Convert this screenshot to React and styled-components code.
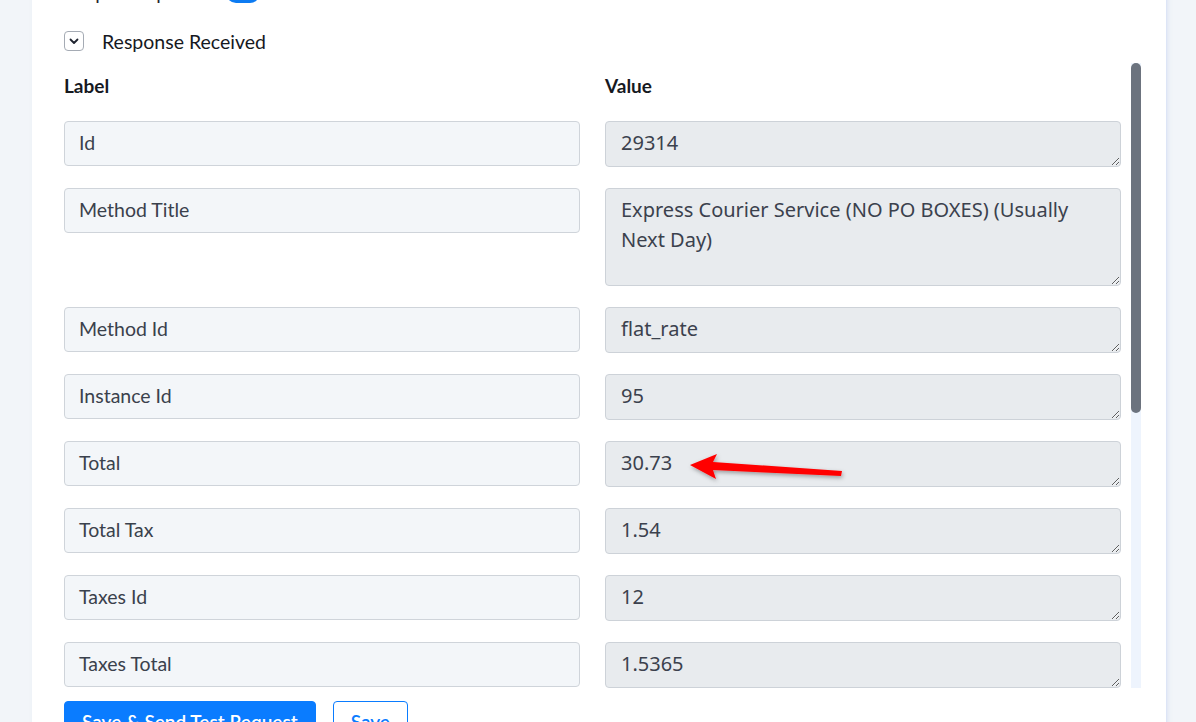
import React from "react";
import styled, { createGlobalStyle } from "styled-components";

const GlobalStyle = createGlobalStyle`
  body {
    margin: 0;
    background: #f2f5f9;
    font-family: Lato, "Noto Sans", sans-serif;
  }
`;

const Page = styled.div`
  height: 722px;
  overflow: hidden;
  padding: 0 30px 0 32px;
`;

const Card = styled.div`
  background: #ffffff;
  margin-top: -20px;
  padding: 0 25px 40px 32px;
  box-shadow: 1px 0 0 #dde5f6, 2px 0 4px rgba(160, 180, 230, 0.25);
`;

const TopRow = styled.div`
  display: flex;
  align-items: center;
  gap: 18px;
  height: 24px;
  font-size: 19.5px;
  color: #1f2430;
`;

const Toggle = styled.span`
  display: inline-block;
  width: 34px;
  height: 20px;
  border-radius: 10px;
  background: #0d7bf2;
  margin-top: 2px;
`;

const ResponseHeader = styled.div`
  display: flex;
  align-items: center;
  gap: 18px;
  margin-top: 25px;
  height: 24px;
  font-size: 19.5px;
  color: #16191f;
`;

const ChevronBox = styled.span`
  width: 18px;
  height: 18px;
  border: 1px solid #a5abb4;
  border-radius: 4px;
  display: flex;
  align-items: center;
  justify-content: center;
`;

const ScrollFrame = styled.div`
  display: flex;
  margin-top: 10px;
  height: 625px;
`;

const ScrollArea = styled.div`
  flex: 1;
  overflow: hidden;
`;

const ScrollTrack = styled.div`
  width: 10px;
  background: #eef4fd;
`;

const ScrollThumb = styled.div`
  height: 350px;
  background: #6c737e;
  border-radius: 5px;
`;

const Grid = styled.div`
  display: grid;
  grid-template-columns: 516px 516px;
  column-gap: 25px;
  row-gap: 21px;
  align-items: start;
  padding-bottom: 20px;
`;

const ColHead = styled.div`
  padding-top: 12px;
  height: 25px;
  line-height: 22px;
  font-size: 19px;
  font-weight: 700;
  color: #16191f;
`;

const LabelBox = styled.div`
  box-sizing: border-box;
  height: 45px;
  padding: 6px 14px;
  line-height: 30px;
  font-size: 19.5px;
  color: #3a414c;
  background: #f3f6f9;
  border: 1px solid #cfd4da;
  border-radius: 4px;
`;

const ValueCell = styled.div`
  position: relative;
`;

const ValueArea = styled.textarea`
  display: block;
  box-sizing: border-box;
  width: 100%;
  height: ${(p) => (p.$tall ? "98px" : "46px")};
  margin: 0;
  padding: 6px 15px;
  line-height: 30px;
  font-size: 20px;
  font-family: "Noto Sans", sans-serif;
  color: #3b414d;
  background: #e8ebee;
  border: 1px solid #cdd2d8;
  border-radius: 4px;
  outline: none;
  overflow: hidden;
`;

const Arrow = styled.svg`
  position: absolute;
  left: 0;
  top: 0;
  overflow: visible;
  pointer-events: none;
`;

const Actions = styled.div`
  display: flex;
  gap: 17px;
  margin-top: 13px;
`;

const Button = styled.button`
  height: 40px;
  padding: 0 17px;
  font-family: Lato, sans-serif;
  font-size: 19px;
  font-weight: 600;
  border-radius: 4px;
  border: 1px solid #0a7cff;
  background: ${(p) => (p.$primary ? "#0a7cff" : "#ffffff")};
  color: ${(p) => (p.$primary ? "#ffffff" : "#0a7cff")};
`;

const rows = [
  { label: "Id", value: "29314" },
  { label: "Method Title", value: "Express Courier Service (NO PO BOXES) (Usually Next Day)", tall: true },
  { label: "Method Id", value: "flat_rate" },
  { label: "Instance Id", value: "95" },
  { label: "Total", value: "30.73", arrow: true },
  { label: "Total Tax", value: "1.54" },
  { label: "Taxes Id", value: "12" },
  { label: "Taxes Total", value: "1.5365" },
  { label: "Taxes Subtotal", value: "" },
  { label: "Meta Data Id", value: "245771" },
  { label: "Meta Data Key", value: "Items" },
];

const RedArrow = () => (
  <Arrow width="1" height="1">
    <defs>
      <filter id="shadow" x="-20%" y="-50%" width="140%" height="200%">
        <feDropShadow dx="1" dy="2" stdDeviation="2" floodColor="#000" floodOpacity="0.35" />
      </filter>
    </defs>
    <polygon
      points="85,24 112,13 108,21 237,30 236,35 108,29 111,38"
      fill="#ff0000"
      filter="url(#shadow)"
    />
  </Arrow>
);

export default function App() {
  return (
    <>
      <GlobalStyle />
      <Page>
        <Card>
          <TopRow>
            Simple Response <Toggle />
          </TopRow>
          <ResponseHeader>
            <ChevronBox>
              <svg width="10" height="7" viewBox="0 0 10 7">
                <path d="M1.5 1.5 L5 5 L8.5 1.5" fill="none" stroke="#1f2430" strokeWidth="1.8" strokeLinecap="round" strokeLinejoin="round" />
              </svg>
            </ChevronBox>
            Response Received
          </ResponseHeader>
          <ScrollFrame>
            <ScrollArea>
              <Grid>
                <ColHead>Label</ColHead>
                <ColHead>Value</ColHead>
                {rows.map((r, i) => (
                  <React.Fragment key={i}>
                    <LabelBox>{r.label}</LabelBox>
                    <ValueCell>
                      <ValueArea readOnly $tall={r.tall} defaultValue={r.value} />
                      {r.arrow && <RedArrow />}
                    </ValueCell>
                  </React.Fragment>
                ))}
              </Grid>
            </ScrollArea>
            <ScrollTrack>
              <ScrollThumb />
            </ScrollTrack>
          </ScrollFrame>
          <Actions>
            <Button $primary>Save &amp; Send Test Request</Button>
            <Button>Save</Button>
          </Actions>
        </Card>
      </Page>
    </>
  );
}
